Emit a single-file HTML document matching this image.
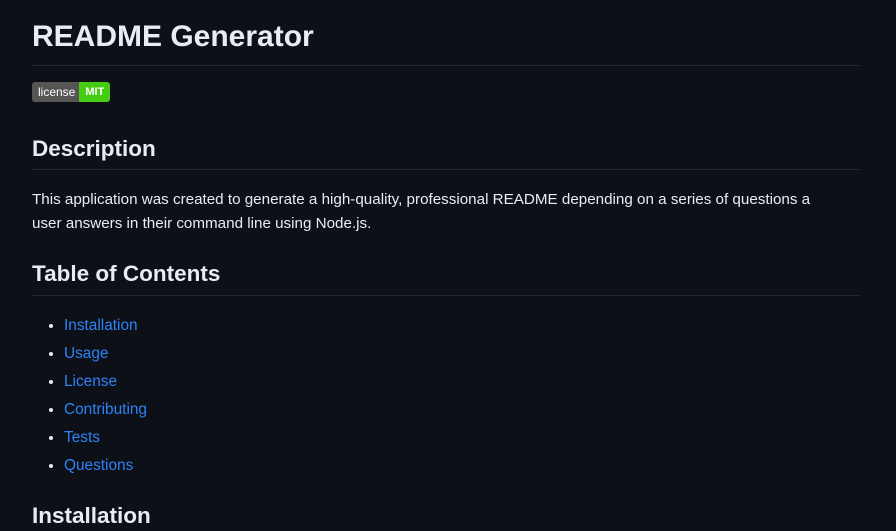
<!DOCTYPE html>
<html><head><style>
body{margin:0;background:#0d1117;color:#e6edf3;font-family:"Liberation Sans",sans-serif;width:896px;height:527px;overflow:hidden}
.w{position:relative}
.a{position:absolute;left:32px;white-space:nowrap}
h1,h2{margin:0;font-weight:600}
.rule{position:absolute;left:32px;width:829px;height:1px;background:#21262d}
a{color:#2f81f7;text-decoration:none}
p{margin:0;font-size:15.2px;line-height:24px}
li{font-size:15.4px;height:28px;line-height:28px}
ul{margin:0;padding-left:32px}
</style></head><body><div class="w">
<h1 class="a" style="top:16px;font-size:30px;line-height:42px">README Generator</h1>
<div class="rule" style="top:65px"></div>
<div class="a" style="top:82px;height:20px;display:flex;border-radius:3px;overflow:hidden;font-size:12px;line-height:20px">
<span style="background:#555;color:#fff;padding:0 4px 0 6px">license</span><span style="background:#4c1;color:#fff;padding:0 6px;font-weight:bold;font-size:11px">MIT</span></div>
<h2 class="a" style="top:134px;font-size:22.5px;line-height:30px">Description</h2>
<div class="rule" style="top:169px"></div>
<p class="a" style="top:188px;white-space:normal;width:800px">This application was created to generate a high-quality, professional README depending on a series of questions a<br>user answers in their command line using Node.js.</p>
<h2 class="a" style="top:259px;font-size:22.5px;line-height:30px">Table of Contents</h2>
<div class="rule" style="top:295px"></div>
<ul class="a" style="top:312px;left:32px">
<li><a>Installation</a></li><li><a>Usage</a></li><li><a>License</a></li><li><a>Contributing</a></li><li><a>Tests</a></li><li><a>Questions</a></li></ul>
<h2 class="a" style="top:501px;font-size:22.5px;line-height:30px">Installation</h2>
</div></body></html>
